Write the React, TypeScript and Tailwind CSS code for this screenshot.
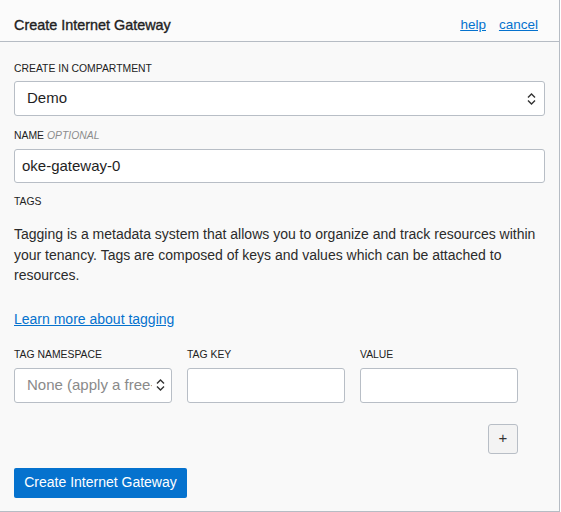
function Updown() {
  return (
    <svg width="9" height="14" viewBox="0 0 9 14" className="shrink-0">
      <path d="M1 5.5 L4.5 2 L8 5.5" fill="none" stroke="#333" strokeWidth="1.4" />
      <path d="M1 8.5 L4.5 12 L8 8.5" fill="none" stroke="#333" strokeWidth="1.4" />
    </svg>
  );
}

function SelectBox({ value, muted, className }: { value: string; muted?: boolean; className?: string }) {
  return (
    <div
      className={`flex h-[35px] items-center gap-1 rounded-[3px] border border-[#b8bec6] bg-white pl-3 pr-2 ${className ?? ""}`}
    >
      <span
        className={`flex-1 overflow-hidden whitespace-nowrap text-[15px] ${muted ? "text-[#8a8a8a]" : "text-[#1f1f1f]"}`}
      >
        {value}
      </span>
      <Updown />
    </div>
  );
}

function Label({ children }: { children: React.ReactNode }) {
  return <div className="text-[10.4px] leading-[14px] text-[#222]">{children}</div>;
}

export default function App() {
  return (
    <div className="h-[512px] w-[560px] border-b border-r border-[#b6bcc4] bg-[#f9f9f9] font-['Liberation_Sans',Arial,sans-serif] text-[#2b2b2b]">
      <header className="flex h-[42px] items-center justify-between border-b border-[#b6bcc4] bg-[#fbfbfb] pl-[14px] pr-[21px] pt-[10px]">
        <h1 className="text-[14.4px] text-[#222] [-webkit-text-stroke:0.35px_#222]">Create Internet Gateway</h1>
        <nav className="flex gap-[13px] text-[13.5px] text-[#0572ce] underline">
          <a href="#">help</a>
          <a href="#">cancel</a>
        </nav>
      </header>

      <div className="flex flex-col px-[14px] pt-[20px]">
        <Label>CREATE IN COMPARTMENT</Label>
        <SelectBox value="Demo" className="mt-[5px]" />

        <div className="mt-[13px] text-[10.4px] leading-[14px] text-[#222]">
          NAME <span className="italic text-[#8c8c8c]">OPTIONAL</span>
        </div>
        <div className="mt-[6px] flex h-[34px] items-center rounded-[3px] border border-[#b8bec6] bg-white px-[7px] text-[15px] text-[#1f1f1f]">
          oke-gateway-0
        </div>

        <div className="mt-[12px]">
          <Label>TAGS</Label>
        </div>
        <p className="mt-[15px] text-[14px] leading-[20.5px] text-[#2b2b2b]">
          Tagging is a metadata system that allows you to organize and track resources within your tenancy. Tags are
          composed of keys and values which can be attached to resources.
        </p>

        <a href="#" className="mt-[24px] self-start text-[14px] leading-[18px] text-[#0572ce] underline">
          Learn more about tagging
        </a>

        <div className="mt-[20px] grid w-[504px] grid-cols-3 gap-x-[15px]">
          <Label>TAG NAMESPACE</Label>
          <Label>TAG KEY</Label>
          <Label>VALUE</Label>
          <SelectBox value="None (apply a free-form tag)" muted className="mt-[6px] pr-[6px]" />
          <div className="mt-[6px] h-[35px] rounded-[3px] border border-[#b8bec6] bg-white" />
          <div className="mt-[6px] h-[35px] rounded-[3px] border border-[#b8bec6] bg-white" />
        </div>

        <div className="mt-[21px] flex w-[504px] justify-end">
          <button className="flex h-[30px] w-[30px] items-center justify-center rounded-[3px] border border-[#b8bec6] bg-[#f3f3f3] text-[15px] text-[#333]">
            +
          </button>
        </div>

        <button className="mt-[14px] h-[30px] w-[173px] self-start rounded-[2px] bg-[#0572ce] text-[14px] text-white">
          Create Internet Gateway
        </button>
      </div>
    </div>
  );
}
